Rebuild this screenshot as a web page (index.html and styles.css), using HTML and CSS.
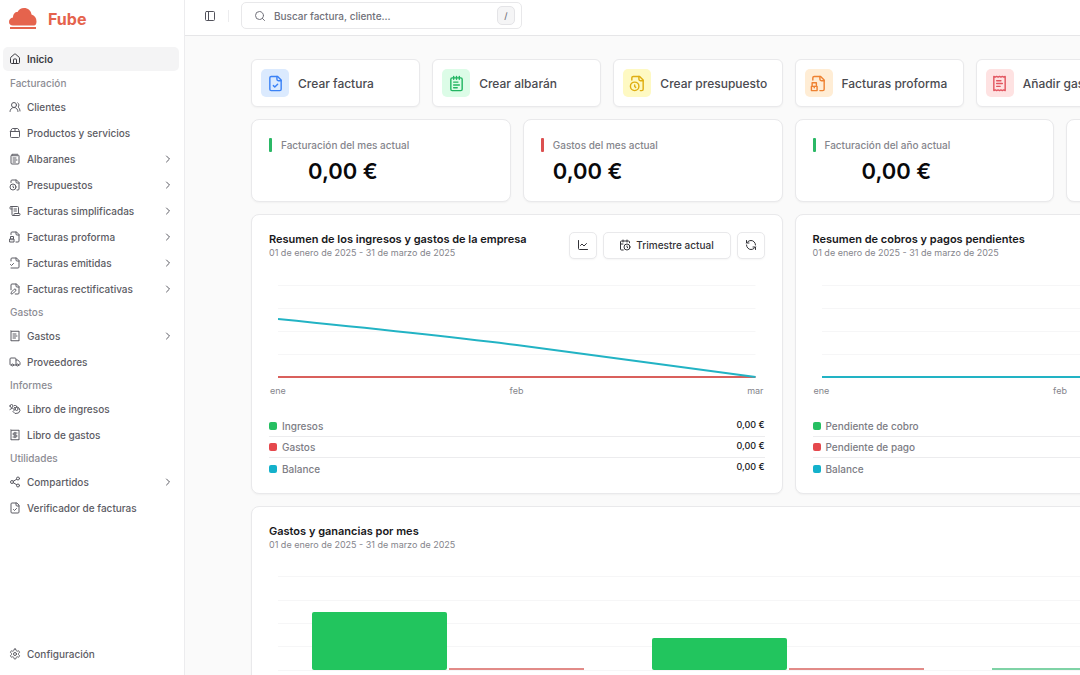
FILE: index.html
```html
<!DOCTYPE html>
<html lang="es">
<head>
<meta charset="utf-8">
<meta name="viewport" content="width=device-width, initial-scale=1">
<title>Fube</title>
<link rel="stylesheet" href="styles.css">
</head>
<body>
<svg class="sprite" aria-hidden="true">
  <symbol id="house" viewBox="0 0 24 24"><path d="M15 21v-8a1 1 0 0 0-1-1h-4a1 1 0 0 0-1 1v8"/><path d="M3 10a2 2 0 0 1 .709-1.528l7-6a2 2 0 0 1 2.582 0l7 6A2 2 0 0 1 21 10v9a2 2 0 0 1-2 2H5a2 2 0 0 1-2-2z"/></symbol>
  <symbol id="users" viewBox="0 0 24 24"><path d="M18 21a8 8 0 0 0-16 0"/><circle cx="10" cy="8" r="5"/><path d="M22 20c0-3.370-2-6.500-4-8a5 5 0 0 0-.450-8.300"/></symbol>
  <symbol id="package" viewBox="0 0 24 24"><path d="M3 9h18v10a2 2 0 0 1-2 2H5a2 2 0 0 1-2-2V9Z"/><path d="m3 9 2.450-4.900A2 2 0 0 1 7.240 3h9.520a2 2 0 0 1 1.800 1.100L21 9"/><path d="M12 3v6"/></symbol>
  <symbol id="notepad" viewBox="0 0 24 24"><path d="M8 2v4M12 2v4M16 2v4"/><rect x="4" y="4" width="16" height="18" rx="2"/><path d="M8 10h6M8 14h8M8 18h5"/></symbol>
  <symbol id="file-clock" viewBox="0 0 24 24"><path d="M16 22h2a2 2 0 0 0 2-2V7l-5-5H6a2 2 0 0 0-2 2v3"/><path d="M14 2v4a2 2 0 0 0 2 2h4"/><circle cx="8" cy="16" r="6"/><path d="M9.500 17.500 8 16.250V14"/></symbol>
  <symbol id="scroll" viewBox="0 0 24 24"><path d="M15 12h-5M15 8h-5"/><path d="M19 17V5a2 2 0 0 0-2-2H4"/><path d="M8 21h12a2 2 0 0 0 2-2v-1a1 1 0 0 0-1-1H11a1 1 0 0 0-1 1v1a2 2 0 1 1-4 0V5a2 2 0 1 0-4 0v2a1 1 0 0 0 1 1h3"/></symbol>
  <symbol id="file-box" viewBox="0 0 24 24"><path d="M14 22h4a2 2 0 0 0 2-2V7l-5-5H6a2 2 0 0 0-2 2v3"/><path d="M14 2v4a2 2 0 0 0 2 2h4"/><path d="M3 16v-5h6v5"/><rect x="2" y="16" width="8" height="6"/><path d="M6 16v2"/></symbol>
  <symbol id="file-sent" viewBox="0 0 24 24"><path d="M4 22h14a2 2 0 0 0 2-2V7l-5-5H6a2 2 0 0 0-2 2v4"/><path d="M14 2v4a2 2 0 0 0 2 2h4"/><path d="m3 15 2 2 4-4"/></symbol>
  <symbol id="file-pen" viewBox="0 0 24 24"><path d="M12.500 22H18a2 2 0 0 0 2-2V7l-5-5H6a2 2 0 0 0-2 2v9.500"/><path d="M14 2v4a2 2 0 0 0 2 2h4"/><path d="M13.378 15.626a1 1 0 1 0-3.004-3.004l-5.010 5.012a2 2 0 0 0-.506.854l-.837 2.870a.5.5 0 0 0 .620.620l2.870-.837a2 2 0 0 0 .854-.506z"/></symbol>
  <symbol id="receipt" viewBox="0 0 24 24"><path d="M4 2v20l2-1 2 1 2-1 2 1 2-1 2 1 2-1 2 1V2l-2 1-2-1-2 1-2-1-2 1-2-1-2 1Z"/><path d="M14 8H8M16 12H8M13 16H8"/></symbol>
  <symbol id="truck" viewBox="0 0 24 24"><path d="M14 18V6a2 2 0 0 0-2-2H4a2 2 0 0 0-2 2v11a1 1 0 0 0 1 1h2"/><path d="M15 18H9"/><path d="M19 18h2a1 1 0 0 0 1-1v-3.650a1 1 0 0 0-.220-.624l-3.480-4.350A1 1 0 0 0 17.520 8H14"/><circle cx="17" cy="18" r="2"/><circle cx="7" cy="18" r="2"/></symbol>
  <symbol id="hand-coins" viewBox="0 0 24 24"><g transform="translate(24 0) scale(-1 1)"><path d="M13 5H11a2 2 0 1 0 0 4h2"/><circle cx="19" cy="6" r="3"/><circle cx="9" cy="12" r="3"/><path d="M22 13l-5-3-4 4 3 3-4 4-7-1-3-5 2-5 5-3"/></g></symbol>
  <symbol id="receipt-money" viewBox="0 0 24 24"><path d="M4 2v20l2-1 2 1 2-1 2 1 2-1 2 1 2-1 2 1V2l-2 1-2-1-2 1-2-1-2 1-2-1-2 1Z"/><path d="M16 8h-6a2 2 0 1 0 0 4h4a2 2 0 1 1 0 4H8"/><path d="M12 17.500v-11"/></symbol>
  <symbol id="share" viewBox="0 0 24 24"><circle cx="18" cy="5" r="3"/><circle cx="6" cy="12" r="3"/><circle cx="18" cy="19" r="3"/><path d="m8.590 13.510 6.830 3.980M15.410 6.510l-6.820 3.980"/></symbol>
  <symbol id="file-check" viewBox="0 0 24 24"><path d="M15 2H6a2 2 0 0 0-2 2v16a2 2 0 0 0 2 2h12a2 2 0 0 0 2-2V7Z"/><path d="M14 2v4a2 2 0 0 0 2 2h4"/><path d="m9 15 2 2 4-4"/></symbol>
  <symbol id="settings" viewBox="0 0 24 24"><path d="M12.220 2h-.440a2 2 0 0 0-2 2v.180a2 2 0 0 1-1 1.730l-.430.250a2 2 0 0 1-2 0l-.150-.080a2 2 0 0 0-2.730.730l-.220.380a2 2 0 0 0 .730 2.730l.150.100a2 2 0 0 1 1 1.720v.510a2 2 0 0 1-1 1.740l-.150.090a2 2 0 0 0-.730 2.730l.220.380a2 2 0 0 0 2.730.730l.150-.080a2 2 0 0 1 2 0l.430.250a2 2 0 0 1 1 1.730V20a2 2 0 0 0 2 2h.440a2 2 0 0 0 2-2v-.180a2 2 0 0 1 1-1.730l.430-.250a2 2 0 0 1 2 0l.150.080a2 2 0 0 0 2.730-.730l.220-.390a2 2 0 0 0-.730-2.730l-.150-.080a2 2 0 0 1-1-1.740v-.500a2 2 0 0 1 1-1.740l.150-.090a2 2 0 0 0 .730-2.730l-.220-.380a2 2 0 0 0-2.730-.730l-.150.080a2 2 0 0 1-2 0l-.430-.250a2 2 0 0 1-1-1.730V4a2 2 0 0 0-2-2z"/><circle cx="12" cy="12" r="3"/></symbol>
  <symbol id="chevron" viewBox="0 0 24 24"><path d="m9 18 6-6-6-6"/></symbol>
  <symbol id="panel-left" viewBox="0 0 24 24"><rect x="3" y="3" width="18" height="18" rx="2"/><path d="M9 3v18"/></symbol>
  <symbol id="search" viewBox="0 0 24 24"><circle cx="11" cy="11" r="8"/><path d="m21 21-4.300-4.300"/></symbol>
  <symbol id="chart" viewBox="0 0 24 24"><path d="M3 3v16a2 2 0 0 0 2 2h16"/><path d="m19 9-5 5-4-4-3 3"/></symbol>
  <symbol id="calendar" viewBox="0 0 24 24"><path d="M21 7.500V6a2 2 0 0 0-2-2H5a2 2 0 0 0-2 2v14a2 2 0 0 0 2 2h3.500"/><path d="M16 2v4M8 2v4M3 10h5"/><path d="M17.500 17.500 16 16.300V14"/><circle cx="16" cy="16" r="6"/></symbol>
  <symbol id="refresh" viewBox="0 0 24 24"><path d="M21 12a9 9 0 0 0-9-9 9.750 9.750 0 0 0-6.740 2.740L3 8"/><path d="M3 3v5h5"/><path d="M3 12a9 9 0 0 0 9 9 9.750 9.750 0 0 0 6.740-2.740L21 16"/><path d="M16 16h5v5"/></symbol>
</svg>

<div class="app">
  <aside class="sidebar">
    <a class="brand" href="#">
      <svg class="brand-mark" viewBox="0 0 28 22" aria-hidden="true"><path d="M4 17.500C1.500 17.500 0 16 0 14c0-2.500 1.500-4 4-4.500C4 6 6 4 8.500 4 10 1.500 12 0 15 0c4 0 7 2.500 7.500 6.500 3 1 5 3.500 5 7 0 2.500-1 4-2.500 4z"/><path d="M1 19h26v2H1z"/></svg>
      <span class="brand-name">Fube</span>
    </a>
    <nav class="nav">
      <a class="nav-item nav-item-active" href="#"><svg class="icon"><use href="#house"/></svg><span>Inicio</span></a>
      <h2 class="nav-label">Facturación</h2>
      <ul class="nav-list">
        <li><a class="nav-item" href="#"><svg class="icon"><use href="#users"/></svg><span>Clientes</span></a></li>
        <li><a class="nav-item" href="#"><svg class="icon"><use href="#package"/></svg><span>Productos y servicios</span></a></li>
        <li><a class="nav-item" href="#"><svg class="icon"><use href="#notepad"/></svg><span>Albaranes</span><svg class="icon chevron"><use href="#chevron"/></svg></a></li>
        <li><a class="nav-item" href="#"><svg class="icon"><use href="#file-clock"/></svg><span>Presupuestos</span><svg class="icon chevron"><use href="#chevron"/></svg></a></li>
        <li><a class="nav-item" href="#"><svg class="icon"><use href="#scroll"/></svg><span>Facturas simplificadas</span><svg class="icon chevron"><use href="#chevron"/></svg></a></li>
        <li><a class="nav-item" href="#"><svg class="icon"><use href="#file-box"/></svg><span>Facturas proforma</span><svg class="icon chevron"><use href="#chevron"/></svg></a></li>
        <li><a class="nav-item" href="#"><svg class="icon"><use href="#file-sent"/></svg><span>Facturas emitidas</span><svg class="icon chevron"><use href="#chevron"/></svg></a></li>
        <li><a class="nav-item" href="#"><svg class="icon"><use href="#file-pen"/></svg><span>Facturas rectificativas</span><svg class="icon chevron"><use href="#chevron"/></svg></a></li>
      </ul>
      <h2 class="nav-label">Gastos</h2>
      <ul class="nav-list">
        <li><a class="nav-item" href="#"><svg class="icon"><use href="#receipt"/></svg><span>Gastos</span><svg class="icon chevron"><use href="#chevron"/></svg></a></li>
        <li><a class="nav-item" href="#"><svg class="icon"><use href="#truck"/></svg><span>Proveedores</span></a></li>
      </ul>
      <h2 class="nav-label">Informes</h2>
      <ul class="nav-list">
        <li><a class="nav-item" href="#"><svg class="icon"><use href="#hand-coins"/></svg><span>Libro de ingresos</span></a></li>
        <li><a class="nav-item" href="#"><svg class="icon"><use href="#receipt-money"/></svg><span>Libro de gastos</span></a></li>
      </ul>
      <h2 class="nav-label">Utilidades</h2>
      <ul class="nav-list">
        <li><a class="nav-item" href="#"><svg class="icon"><use href="#share"/></svg><span>Compartidos</span><svg class="icon chevron"><use href="#chevron"/></svg></a></li>
        <li><a class="nav-item" href="#"><svg class="icon"><use href="#file-check"/></svg><span>Verificador de facturas</span></a></li>
      </ul>
    </nav>
    <a class="nav-item" href="#"><svg class="icon"><use href="#settings"/></svg><span>Configuración</span></a>
  </aside>

  <div class="main">
    <header class="topbar">
      <button class="toggle" type="button" aria-label="Alternar menú"><svg class="icon"><use href="#panel-left"/></svg></button>
      <span class="divider"></span>
      <label class="search">
        <svg class="icon"><use href="#search"/></svg>
        <input class="search-input" type="text" aria-label="Buscar" placeholder="Buscar factura, cliente...">
        <kbd class="key">/</kbd>
      </label>
    </header>

    <main class="content">
      <div class="actions">
        <button class="card action" type="button"><span class="tile tile-blue"><svg class="icon"><use href="#file-check"/></svg></span><span>Crear factura</span></button>
        <button class="card action" type="button"><span class="tile tile-green"><svg class="icon"><use href="#notepad"/></svg></span><span>Crear albarán</span></button>
        <button class="card action" type="button"><span class="tile tile-yellow"><svg class="icon"><use href="#file-clock"/></svg></span><span>Crear presupuesto</span></button>
        <button class="card action" type="button"><span class="tile tile-orange"><svg class="icon"><use href="#file-box"/></svg></span><span>Facturas proforma</span></button>
        <button class="card action" type="button"><span class="tile tile-red"><svg class="icon"><use href="#receipt"/></svg></span><span>Añadir gasto</span></button>
        <div class="card"></div>
      </div>

      <div class="stats">
        <section class="card stat"><h2 class="stat-label">Facturación del mes actual</h2><p class="stat-value stat-value-month">0,00 €</p></section>
        <section class="card stat"><h2 class="stat-label stat-label-red">Gastos del mes actual</h2><p class="stat-value">0,00 €</p></section>
        <section class="card stat"><h2 class="stat-label">Facturación del año actual</h2><p class="stat-value stat-value-year">0,00 €</p></section>
        <div class="card"></div>
      </div>

      <div class="panels">
        <section class="card panel">
          <div class="panel-head">
            <div>
              <h2 class="panel-title">Resumen de los ingresos y gastos de la empresa</h2>
              <p class="panel-date">01 de enero de 2025 - 31 de marzo de 2025</p>
            </div>
            <div class="tools">
              <button class="tool" type="button" aria-label="Tipo de gráfico"><svg class="icon"><use href="#chart"/></svg></button>
              <button class="tool tool-wide" type="button"><svg class="icon"><use href="#calendar"/></svg>Trimestre actual</button>
              <button class="tool" type="button" aria-label="Actualizar"><svg class="icon"><use href="#refresh"/></svg></button>
            </div>
          </div>
          <svg class="chart" viewBox="0 0 478 100" preserveAspectRatio="none" aria-hidden="true">
            <path class="grid-line" d="M0 4.500H478M0 27.500H478M0 50.500H478M0 73.500H478"/>
            <path class="line line-red" d="M0 96H478"/>
            <path class="line line-cyan" d="M0 38C80 46 159 54 239 64C319 74 398 86 478 96"/>
          </svg>
          <div class="axis"><span>ene</span><span>feb</span><span>mar</span></div>
          <dl class="legend">
            <div class="legend-row"><dt class="key-green">Ingresos</dt><dd>0,00 €</dd></div>
            <div class="legend-row"><dt class="key-red">Gastos</dt><dd>0,00 €</dd></div>
            <div class="legend-row"><dt class="key-cyan">Balance</dt><dd>0,00 €</dd></div>
          </dl>
        </section>

        <section class="card panel">
          <div class="panel-head">
            <div>
              <h2 class="panel-title">Resumen de cobros y pagos pendientes</h2>
              <p class="panel-date">01 de enero de 2025 - 31 de marzo de 2025</p>
            </div>
          </div>
          <svg class="chart" viewBox="0 0 478 100" preserveAspectRatio="none" aria-hidden="true">
            <path class="grid-line" d="M0 4.500H478M0 27.500H478M0 50.500H478M0 73.500H478"/>
            <path class="line line-cyan" d="M0 96H478"/>
          </svg>
          <div class="axis"><span>ene</span><span>feb</span><span>mar</span></div>
          <dl class="legend">
            <div class="legend-row"><dt class="key-green">Pendiente de cobro</dt><dd>0,00 €</dd></div>
            <div class="legend-row"><dt class="key-red">Pendiente de pago</dt><dd>0,00 €</dd></div>
            <div class="legend-row"><dt class="key-cyan">Balance</dt><dd>0,00 €</dd></div>
          </dl>
        </section>
      </div>

      <section class="card panel">
        <div class="panel-head">
          <div>
            <h2 class="panel-title">Gastos y ganancias por mes</h2>
            <p class="panel-date">01 de enero de 2025 - 31 de marzo de 2025</p>
          </div>
        </div>
        <svg class="chart" viewBox="0 0 1021 100" preserveAspectRatio="none" aria-hidden="true">
          <path class="grid-line" d="M0 3.500H1021M0 27.500H1021M0 50.500H1021M0 73.500H1021M0 97.500H1021"/>
          <rect class="bar-green" x="34" y="39" width="135" height="58" rx="2"/>
          <rect class="bar-red" x="171" y="95" width="135" height="2"/>
          <rect class="bar-green" x="374" y="65" width="135" height="32" rx="2"/>
          <rect class="bar-red" x="511" y="95" width="135" height="2"/>
          <rect class="bar-flat" x="714" y="95" width="135" height="2"/>
          <rect class="bar-red" x="851" y="95" width="135" height="2"/>
        </svg>
      </section>
    </main>
  </div>
</div>
</body>
</html>
```
FILE: styles.css
```css
* {
  box-sizing: border-box;
}

body {
  margin: 0;
  background: #fafafa;
  color: #18181b;
  font-family: Inter, "Liberation Sans", sans-serif;
  font-size: 10px;
  font-weight: 500;
}

h2, p, ul, dl, dd {
  margin: 0;
  padding: 0;
  font-size: inherit;
  font-weight: inherit;
}

ul {
  list-style: none;
}

a {
  color: inherit;
  text-decoration: none;
}

button, input, kbd {
  font-family: inherit;
  font-weight: inherit;
  color: inherit;
}

.sprite {
  position: absolute;
  width: 0;
  height: 0;
}

.icon {
  flex: none;
  width: 12px;
  height: 12px;
  fill: none;
  stroke: currentColor;
  stroke-width: 2;
  stroke-linecap: round;
  stroke-linejoin: round;
}

.app {
  display: flex;
  height: 100vh;
  overflow: hidden;
}

/* Sidebar */

.sidebar {
  display: flex;
  flex: none;
  flex-direction: column;
  width: 185px;
  padding: 8px 5px 9px 3px;
  border-right: 1px solid #ececee;
  background: #fff;
  color: #5c5c64;
}

.brand {
  display: flex;
  align-items: center;
  gap: 11px;
  height: 22px;
  margin-bottom: 17px;
  padding-left: 6px;
  color: #e5634d;
}

.brand-mark {
  width: 28px;
  height: 22px;
  fill: currentColor;
}

.brand-name {
  font-size: 16px;
  font-weight: 700;
}

.nav {
  flex: 1;
}

.nav-list {
  display: grid;
  gap: 2px;
}

.nav-item {
  display: flex;
  align-items: center;
  gap: 6px;
  height: 24px;
  padding: 0 5px 0 6px;
  border-radius: 5px;
}

.nav-item-active {
  margin-bottom: 1px;
  background: #f4f4f5;
  color: #3a3a40;
  font-weight: 600;
}

.nav-label {
  padding-left: 7px;
  color: #8c8c93;
  line-height: 23px;
}

.chevron {
  margin-left: auto;
}

/* Top bar */

.main {
  flex: 1;
  min-width: 0;
  overflow: hidden;
}

.topbar {
  display: flex;
  align-items: center;
  height: 36px;
  padding: 2px 19px 6px;
  border-bottom: 1px solid #e6e6e8;
  background: #fff;
  color: #52525b;
}

.toggle {
  display: grid;
  padding: 0;
  border: 0;
  background: none;
}

.divider {
  width: 1px;
  height: 12px;
  margin: 0 12px;
  background: #ececee;
}

.search {
  display: flex;
  align-items: center;
  gap: 8px;
  width: 281px;
  height: 27px;
  padding: 0 6px 0 12px;
  border: 1px solid #e8e8ea;
  border-radius: 5px;
  color: #71717a;
}

.search-input {
  flex: 1;
  min-width: 0;
  padding: 0;
  border: 0;
  outline: 0;
  background: none;
  font-size: 10px;
}

.search-input::placeholder {
  color: #71717a;
  opacity: 1;
}

.key {
  width: 18px;
  border: 1px solid #e4e4e7;
  border-radius: 5px;
  background: #f5f5f6;
  font-size: 9px;
  line-height: 17px;
  text-align: center;
}

/* Dashboard */

.content {
  display: grid;
  gap: 12px;
  min-width: 1207px;
  padding: 23px 66px;
}

.card {
  border: 1px solid #e9e9eb;
  border-radius: 8px;
  background: #fff;
  box-shadow: 0 1px 2px #0000000a;
}

.actions {
  display: grid;
  grid-template-columns: repeat(6, 1fr);
  gap: 12px;
}

.action {
  display: flex;
  align-items: center;
  gap: 9px;
  padding: 9px;
  border-radius: 6px;
  color: #4a4a50;
  font-size: 12px;
  white-space: nowrap;
}

.tile {
  display: grid;
  flex: none;
  place-items: center;
  width: 28px;
  height: 28px;
  border-radius: 5px;
}

.tile .icon {
  width: 17px;
  height: 17px;
}

.tile-blue {
  background: #dbeafe;
  color: #3b82f6;
}

.tile-green {
  background: #dcfce7;
  color: #22b562;
}

.tile-yellow {
  background: #fef9c3;
  color: #dfae12;
}

.tile-orange {
  background: #ffedd5;
  color: #ee8232;
}

.tile-red {
  background: #fee2e2;
  color: #e2555f;
}

.stats {
  display: grid;
  grid-template-columns: repeat(4, 1fr);
  gap: 12px;
}

.stat {
  height: 83px;
  padding: 18px 17px;
}

.stat-label {
  display: flex;
  align-items: center;
  gap: 9px;
  color: #85858c;
  line-height: 14px;
}

.stat-label::before {
  width: 3px;
  height: 14px;
  border-radius: 1px;
  background: #2bb866;
  content: "";
}

.stat-label-red::before {
  background: #dc5050;
}

.stat-value {
  padding-left: 12px;
  color: #09090b;
  font-size: 22px;
  font-weight: 600;
  line-height: 38px;
}

.stat-value-month {
  padding-left: 39px;
}

.stat-value-year {
  padding-left: 49px;
}

.panels {
  display: grid;
  grid-template-columns: repeat(2, 1fr);
  gap: 12px;
}

.panel {
  padding: 16px 17px 14px;
}

.panel-head {
  display: flex;
  justify-content: space-between;
  height: 28px;
}

.panel-title {
  font-size: 11px;
  font-weight: 600;
  line-height: 16px;
}

.panel-date {
  color: #85858c;
  font-size: 9px;
  font-weight: 400;
  line-height: 12px;
}

.tools {
  display: flex;
  gap: 6px;
  align-items: center;
}

.tool {
  display: flex;
  align-items: center;
  justify-content: center;
  gap: 5px;
  width: 28px;
  height: 27px;
  padding: 0;
  border: 1px solid #e9e9eb;
  border-radius: 5px;
  background: #fff;
  box-shadow: 0 1px 2px #0000000a;
  color: #333338;
  font-size: 10px;
}

.tool-wide {
  width: 128px;
}

.chart {
  display: block;
  width: calc(100% - 18px);
  height: 100px;
  margin: 22px 9px 4px;
}

.grid-line, .line {
  fill: none;
  vector-effect: non-scaling-stroke;
}

.grid-line {
  stroke: #f6f6f7;
}

.line {
  stroke-width: 2;
}

.line-red {
  stroke: #d9605c;
}

.line-cyan {
  stroke: #22b3c4;
}

.bar-green {
  fill: #22c55e;
}

.bar-red {
  fill: #e28b88;
}

.bar-flat {
  fill: #7fd3a6;
}

.axis {
  display: flex;
  justify-content: space-between;
  margin-bottom: 19px;
  padding: 0 1px;
  color: #85858c;
  font-size: 9px;
  font-weight: 400;
  line-height: 12px;
}

.legend-row {
  display: flex;
  justify-content: space-between;
  height: 21px;
  border-bottom: 1px solid #ececee;
  line-height: 20px;
}

.legend-row:last-child {
  border-bottom: 0;
}

.legend-row dt {
  display: flex;
  align-items: center;
  gap: 5px;
  color: #7c7c84;
}

.legend-row dt::before {
  width: 8px;
  height: 8px;
  border-radius: 2px;
  content: "";
}

.legend-row dd {
  font-size: 9px;
  line-height: 17px;
}

.key-green::before {
  background: #26bf62;
}

.key-red::before {
  background: #e5484d;
}

.key-cyan::before {
  background: #14b1cb;
}
```
